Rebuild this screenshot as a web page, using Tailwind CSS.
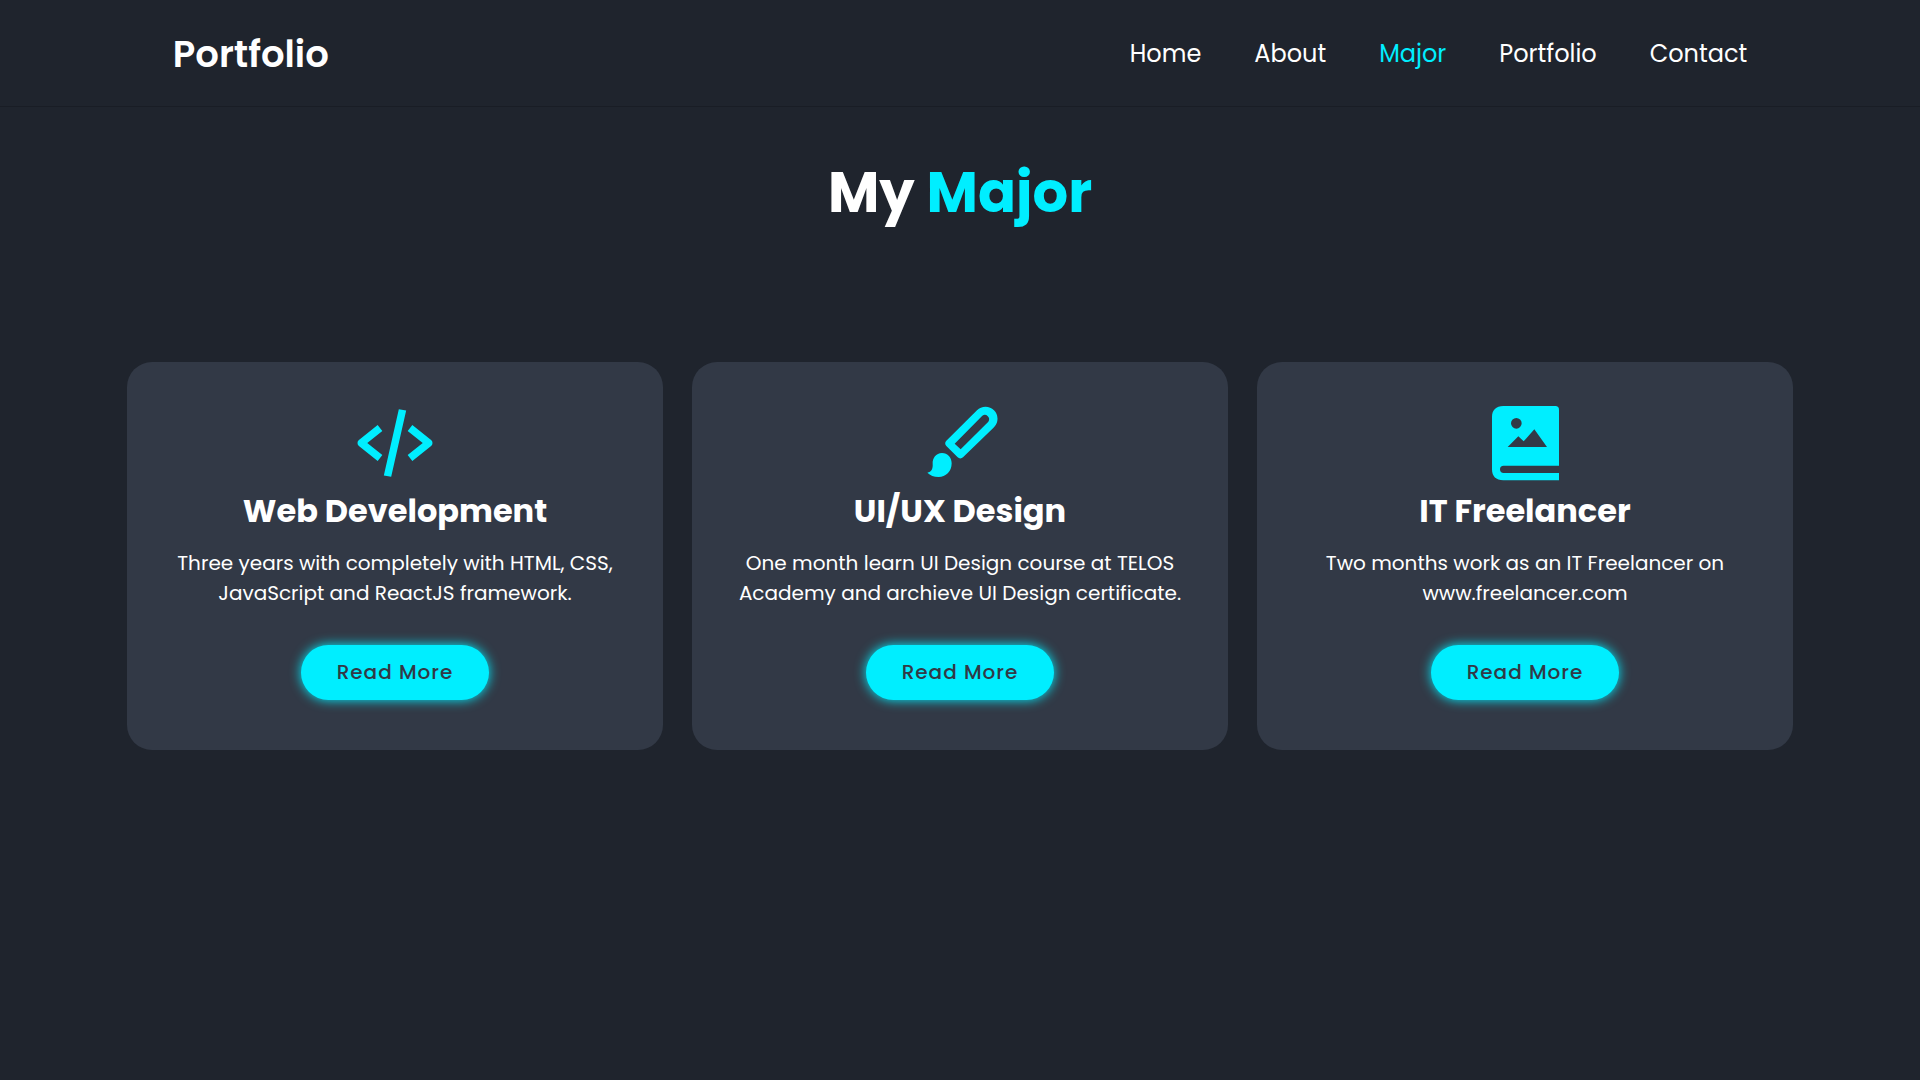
<!DOCTYPE html>
<html lang="en">
<head>
<meta charset="UTF-8">
<meta name="viewport" content="width=device-width, initial-scale=1.0">
<title>Portfolio</title>
<script src="https://cdn.jsdelivr.net/npm/@tailwindcss/browser@4"></script>
</head>
<body class="min-h-screen bg-[#1f242d] font-['Poppins','Inter',sans-serif] text-white">
<header class="flex items-center justify-between border-b border-[#191d25] px-[9%] pt-[25px] pb-[23px]">
  <a href="#" class="text-[37px] leading-[58px] font-semibold">Portfolio</a>
  <nav class="flex gap-[53px] text-2xl">
    <a href="#home">Home</a>
    <a href="#about">About</a>
    <a href="#major" class="text-[#00eeff]">Major</a>
    <a href="#portfolio">Portfolio</a>
    <a href="#contact">Contact</a>
  </nav>
</header>
<main id="major" class="mx-auto max-w-[1666px] pt-11">
  <h2 class="mb-[127px] text-center text-[56px] leading-[84px] font-bold">My <span class="text-[#00eeff]">Major</span></h2>
  <div class="grid grid-cols-3 gap-[29px]">
    <article class="flex flex-col items-center rounded-[25px] bg-[#323946] px-9 pt-9 pb-[50px] text-center">
      <svg class="size-[90px] fill-[#00eeff]" viewBox="0 0 24 24" aria-hidden="true"><path d="m7.375 16.781 1.25-1.562L4.601 12l4.024-3.219-1.25-1.562-5 4a1 1 0 0 0 0 1.562l5 4zm9.25-9.562-1.25 1.562L19.399 12l-4.024 3.219 1.25 1.562 5-4a1 1 0 0 0 0-1.562l-5-4zM13.02 3.02l1.96.33-4 17.63-1.96-.33z"/></svg>
      <h3 class="text-[32px] leading-[46px] font-bold">Web Development</h3>
      <p class="mt-3.5 text-xl leading-[30px]">Three years with completely with HTML, CSS, JavaScript and ReactJS framework.</p>
      <a href="#" class="mt-[37px] rounded-full bg-[#00eeff] px-9 py-[13px] text-xl leading-[29px] font-medium tracking-[1px] text-[#323946] shadow-[0_0_12px_#00eeff]">Read More</a>
    </article>
    <article class="flex flex-col items-center rounded-[25px] bg-[#323946] px-9 pt-9 pb-[50px] text-center">
      <svg class="size-[90px] fill-[#00eeff]" viewBox="45 24 270 270" aria-hidden="true"><path fill-rule="evenodd" d="M139 152 231 61a36 36 0 0 1 51 51L189 202a11 11 0 0 1-16 0l-34-34a11 11 0 0 1 0-16zM164 161l18 17 83-83a13 13 0 0 0-18-18z"/><path d="M82 248C94 246 99 237 98 222 97 204 108 189 126 189c17 0 29 13 29 31 0 25-18 41-39 41-15 0-25-5-34-13z"/></svg>
      <h3 class="text-[32px] leading-[46px] font-bold">UI/UX Design</h3>
      <p class="mt-3.5 text-xl leading-[30px]">One month learn UI Design course at TELOS Academy and archieve UI Design certificate.</p>
      <a href="#" class="mt-[37px] rounded-full bg-[#00eeff] px-9 py-[13px] text-xl leading-[29px] font-medium tracking-[1px] text-[#323946] shadow-[0_0_12px_#00eeff]">Read More</a>
    </article>
    <article class="flex flex-col items-center rounded-[25px] bg-[#323946] px-9 pt-9 pb-[50px] text-center">
      <svg class="size-[90px] fill-[#00eeff]" viewBox="60 24 270 270" aria-hidden="true"><path fill-rule="evenodd" d="M130 48H286a11 11 0 0 1 11 11V227H131a11 11 0 0 0 0 22H297V271H130C108 271 96 259 96 238V81C96 60 108 48 130 48zM169 84a16 16 0 1 0 0 32a16 16 0 1 0 0-32zM143 171H261L223 118 191 154 175 139z"/></svg>
      <h3 class="text-[32px] leading-[46px] font-bold">IT Freelancer</h3>
      <p class="mt-3.5 text-xl leading-[30px]">Two months work as an IT Freelancer on www.freelancer.com</p>
      <a href="#" class="mt-[37px] rounded-full bg-[#00eeff] px-9 py-[13px] text-xl leading-[29px] font-medium tracking-[1px] text-[#323946] shadow-[0_0_12px_#00eeff]">Read More</a>
    </article>
  </div>
</main>
</body>
</html>
